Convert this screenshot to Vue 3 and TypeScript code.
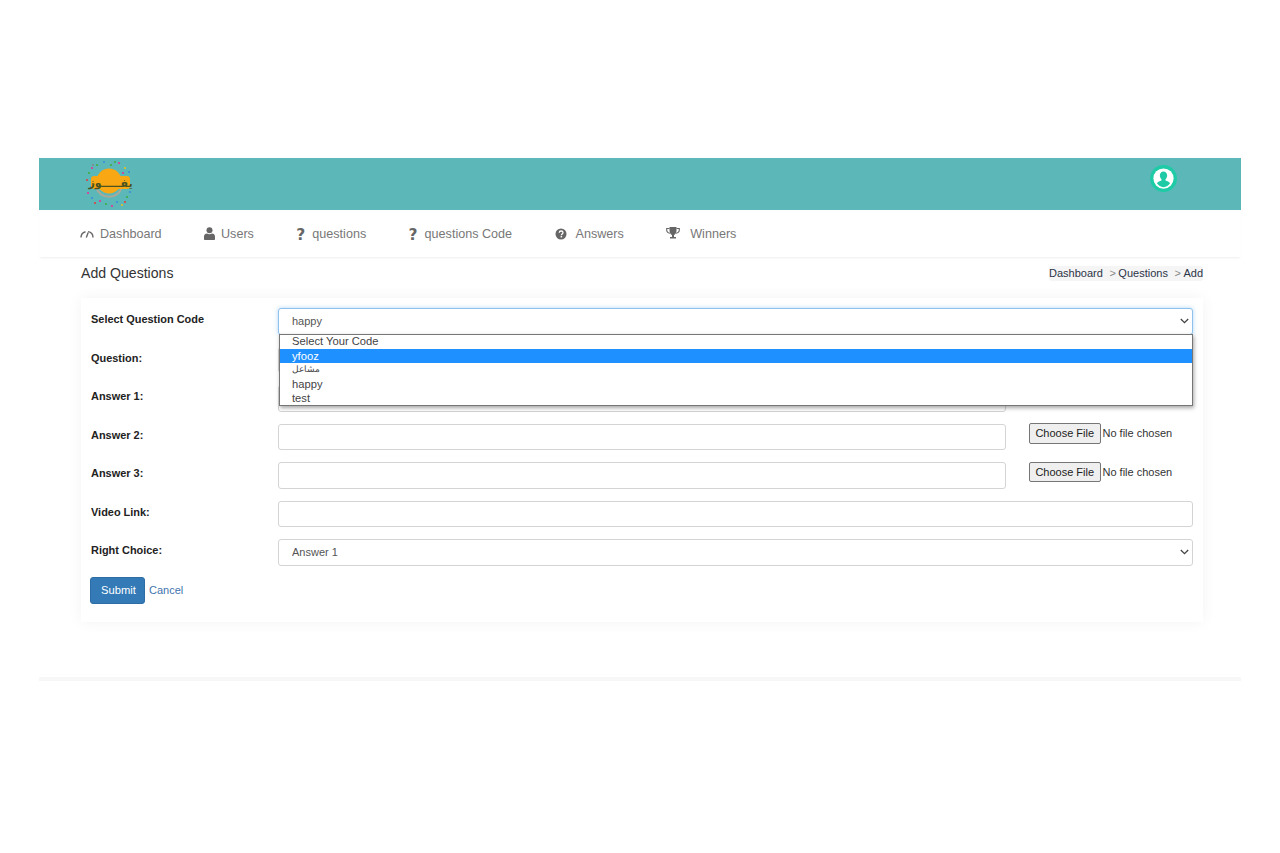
<script setup lang="ts">
interface Field {
  label: string
  file: boolean
}
const fields: Field[] = [
  { label: 'Question:', file: true },
  { label: 'Answer 1:', file: true },
  { label: 'Answer 2:', file: true },
  { label: 'Answer 3:', file: true },
]
const codes: string[] = ['Select Your Code', 'yfooz', 'مشاعل', 'happy', 'test']
const dots: [number, number, string][] = [
  [9, 8, '#e0389a'], [14, 5, '#3cb043'], [21, 2, '#3a8fd8'], [28, 5, '#3cb043'], [36, 3, '#e0389a'], [42, 8, '#e8c020'],
  [46, 12, '#3a8fd8'], [6, 13, '#3cb043'], [4, 20, '#e04040'], [10, 5, '#888888'], [32, 2, '#3cb043'], [40, 13, '#e0389a'],
  [47, 32, '#3a8fd8'], [44, 37, '#3cb043'], [5, 33, '#e0389a'], [9, 38, '#3a8fd8'], [12, 43, '#e04040'], [17, 41, '#e0389a'],
  [23, 44, '#3cb043'], [29, 46, '#e0389a'], [34, 42, '#3a8fd8'], [39, 45, '#e8c020'], [42, 42, '#e04040'], [8, 27, '#3a8fd8'],
]
</script>

<template>
  <div class="page">
    <header class="topbar">
      <svg class="logo" width="50" height="48" viewBox="0 0 50 48">
        <circle v-for="(d, i) in dots" :key="i" :cx="d[0]" :cy="d[1]" r="1.100" :fill="d[2]" />
        <path d="M13 27a13.500 13.500 0 0 0 26 0" fill="none" stroke="#a9a99a" stroke-width="2" />
        <circle cx="26" cy="21" r="12.500" fill="#f9a712" />
        <rect x="8" y="16" width="39" height="13" rx="3" fill="#f9a712" />
        <text x="27.500" y="26.500" class="logo-text" text-anchor="middle">يفـــــوز</text>
      </svg>
      <svg class="avatar" width="27" height="27" viewBox="0 0 28 28">
        <circle cx="14" cy="14" r="14" fill="#1fcba6" />
        <circle cx="14" cy="14" r="10.500" fill="#fff" />
        <path d="M14 6.800c-2.300 0-3.800 1.900-3.800 4.200 0 1.600.7 2.900 1.700 3.700v1.500c-1.800.7-3.700 1.200-4.700 2.700A9 9 0 0 0 14 23a9 9 0 0 0 6.800-4.100c-1-1.500-2.900-2-4.700-2.700v-1.500c1-.8 1.700-2.100 1.700-3.700 0-2.300-1.500-4.200-3.800-4.200z" fill="#1fcba6" />
      </svg>
    </header>

    <nav class="nav">
      <a class="nav-item">
        <span class="ico w20">
          <svg width="14" height="10" viewBox="0 0 14 10" fill="none" stroke="#666" stroke-width="1.400">
            <path d="M1 8.500A6 6 0 0 1 5.500 2.700M8 2.600A6 6 0 0 1 13 8.500" />
            <path d="M6.300 8.500L8.200 3.500" />
          </svg>
        </span>Dashboard
      </a>
      <a class="nav-item">
        <span class="ico w17">
          <svg width="11" height="13" viewBox="0 0 11 13" fill="#666">
            <circle cx="5.500" cy="3.200" r="3" />
            <path d="M0 12v-2.500C0 7.500 1.500 6.500 3 6.500c.7.500 1.500.8 2.500.8s1.800-.3 2.500-.8c1.500 0 3 1 3 3V12c0 .6-.4 1-1 1H1c-.6 0-1-.4-1-1z" />
          </svg>
        </span>Users
      </a>
      <a class="nav-item"><span class="ico w16 qmark">?</span>questions</a>
      <a class="nav-item"><span class="ico w16 qmark">?</span>questions Code</a>
      <a class="nav-item">
        <span class="ico w21">
          <svg width="12" height="12" viewBox="0 0 12 12">
            <circle cx="6" cy="6" r="5.500" fill="#666" />
            <path d="M4.200 4.700C4.300 3.600 5 3 6.100 3c1.100 0 1.900.7 1.900 1.600 0 1.400-1.600 1.400-1.600 2.600" fill="none" stroke="#fff" stroke-width="1.300" />
            <rect x="5.600" y="8" width="1.500" height="1.400" fill="#fff" />
          </svg>
        </span>Answers
      </a>
      <a class="nav-item">
        <span class="ico w24">
          <svg width="14" height="13" viewBox="0 0 14 13" fill="#666">
            <path d="M3.500 0h7v3.500c0 2.300-1.300 4-2.500 4.500v2h2v1.500H4V10h2V8C4.800 7.500 3.500 5.800 3.500 3.500z" />
            <path d="M3.500 1.500H.7v1.500c0 1.700 1.300 3 3.300 3.200M10.500 1.500h2.800v1.500c0 1.700-1.300 3-3.300 3.200" fill="none" stroke="#666" stroke-width="1.100" />
          </svg>
        </span>Winners
      </a>
    </nav>

    <main class="content">
      <div class="title-row">
        <h1 class="title">Add Questions</h1>
        <ol class="crumbs">
          <li>Dashboard</li>
          <li class="sep">&gt;</li>
          <li>Questions</li>
          <li class="sep">&gt;</li>
          <li>Add</li>
        </ol>
      </div>

      <form class="card" @submit.prevent>
        <div class="row">
          <label class="lbl">Select Question Code</label>
          <div class="control anchor">
            <select class="field select focus">
              <option>happy</option>
            </select>
            <ul class="popup">
              <li
                v-for="c in codes"
                :key="c"
                :class="{ active: c === 'yfooz', arabic: c === 'مشاعل' }"
              >{{ c }}</li>
            </ul>
          </div>
        </div>

        <div v-for="f in fields" :key="f.label" class="row">
          <label class="lbl">{{ f.label }}</label>
          <div class="control split">
            <input class="field" type="text" />
            <input class="file" type="file" />
          </div>
        </div>

        <div class="row">
          <label class="lbl">Video Link:</label>
          <div class="control"><input class="field" type="text" /></div>
        </div>

        <div class="row">
          <label class="lbl">Right Choice:</label>
          <div class="control">
            <select class="field select">
              <option>Answer 1</option>
            </select>
          </div>
        </div>

        <div class="actions">
          <button class="btn" type="submit">Submit</button>
          <a class="cancel">Cancel</a>
        </div>
      </form>
    </main>

    <div class="footer-line"></div>
  </div>
</template>

<style>
html, body { margin: 0; background: #fff; }
</style>

<style scoped>
.page {
  box-sizing: border-box;
  width: 1280px;
  height: 853px;
  padding: 158px 39px 0;
  overflow: hidden;
  font-family: "Liberation Sans", Arial, sans-serif;
  font-size: 12px;
  color: #333;
}
.topbar {
  height: 52px;
  background: #5cb7b8;
  display: flex;
  justify-content: space-between;
  padding: 2px 64px 0 44px;
  box-sizing: border-box;
}
.logo { display: block; }
.logo-text {
  font-family: "DejaVu Sans", sans-serif;
  font-size: 11px;
  font-weight: 700;
  fill: #4a5320;
}
.avatar { margin-top: 5px; }
.nav {
  height: 47px;
  display: flex;
  align-items: center;
  gap: 42.400px;
  padding-left: 41px;
  background: #fff;
  box-shadow: 0 2px 2px -1px rgba(0, 0, 0, 0.07);
  font-size: 12.600px;
  color: #777;
}
.nav-item { display: flex; align-items: center; white-space: nowrap; }
.ico { display: inline-flex; align-items: center; flex: none; }
.w16 { width: 16px; }
.w17 { width: 17px; }
.w20 { width: 20px; }
.w21 { width: 21px; }
.w24 { width: 24px; }
.qmark {
  font-family: "DejaVu Sans", sans-serif;
  font-weight: 700;
  font-size: 15.500px;
  color: #666;
  line-height: 1;
  padding-top: 5px;
}
.content { padding: 0 38px 0 42px; }
.title-row {
  display: flex;
  justify-content: space-between;
  align-items: center;
  height: 32px;
  margin-bottom: 9px;
}
.title { margin: 0; font-size: 14.100px; font-weight: 400; color: #333; }
.crumbs {
  display: flex;
  list-style: none;
  margin: 0;
  padding: 0;
  height: 15px;
  line-height: 15px;
  background: #f5f5f5;
  border-radius: 3px;
  font-size: 11px;
  color: #2b3347;
}
.sep { color: #888; margin: 0 2.500px 0 6.600px; }
.card {
  background: #fff;
  box-shadow: 0 0 14px rgba(0, 0, 0, 0.05);
  padding: 10.200px 10px 18px 10px;
  height: 324px;
  box-sizing: border-box;
}
.row {
  display: flex;
  height: 38.500px;
}
.lbl {
  width: 187px;
  flex: none;
  font-weight: 700;
  font-size: 10.950px;
  line-height: 23.800px;
  color: #222;
}
.control { flex: 1; min-width: 0; }
.anchor { position: relative; }
.split { display: flex; gap: 23.500px; }
.split .field { flex: none; width: 727.500px; }
.field {
  box-sizing: border-box;
  display: block;
  width: 100%;
  height: 26.500px;
  border: 1px solid #d4d4d4;
  border-radius: 3px;
  background: #fff;
  padding: 0 10px;
  font-family: inherit;
  font-size: 11px;
  color: #555;
  outline: none;
}
.select {
  appearance: none;
  padding: 0 0 1px 13px;
  background-image: url("data:image/svg+xml,%3Csvg xmlns='http://www.w3.org/2000/svg' width='9' height='6' viewBox='0 0 9 6'%3E%3Cpath d='M.8 1l3.700 3.700L8.200 1' fill='none' stroke='%23444' stroke-width='1.300'/%3E%3C/svg%3E");
  background-repeat: no-repeat;
  background-position: right 3px center;
}
.focus {
  border-color: #8ec1ee;
  box-shadow: 0 0 4px rgba(102, 175, 233, 0.5);
}
.file {
  width: 160px;
  height: 20.500px;
  margin-top: -0.700px;
  font-family: inherit;
  font-size: 11px;
  color: #333;
}
.file::file-selector-button {
  box-sizing: border-box;
  width: 71.500px;
  height: 20.500px;
  margin: 0 2px 0 0;
  padding: 0;
  border: 1px solid #767676;
  border-radius: 2px;
  background: #efefef;
  color: #222;
  font-family: inherit;
  font-size: 11px;
}
.popup {
  position: absolute;
  top: 26px;
  left: 1px;
  right: 0;
  margin: 0;
  padding: 0;
  list-style: none;
  background: #fff;
  border: 1px solid #767676;
  box-shadow: 1px 2px 4px rgba(0, 0, 0, 0.35);
  font-size: 11.200px;
  color: #444;
  z-index: 2;
}
.popup li { height: 14px; line-height: 14px; padding-left: 12px; }
.popup li:first-child { line-height: 12.500px; }
.popup .active { background: #1e90ff; color: #fff; }
.popup .arabic { font-size: 8.600px; line-height: 12px; }
.actions { display: flex; align-items: flex-start; margin: -0.700px 0 0 -1px; }
.btn {
  width: 55px;
  height: 27px;
  padding: 0 0 2px 2px;
  border: 1px solid #2e6da4;
  border-radius: 3px;
  background: #337ab7;
  color: #fff;
  font-family: inherit;
  font-size: 11.200px;
  font-weight: 400;
}
.cancel { margin: 7px 0 0 4px; font-size: 11px; color: #3f74ad; }
.footer-line {
  margin-top: 55px;
  height: 4px;
  background: #f7f7f7;
}
</style>
